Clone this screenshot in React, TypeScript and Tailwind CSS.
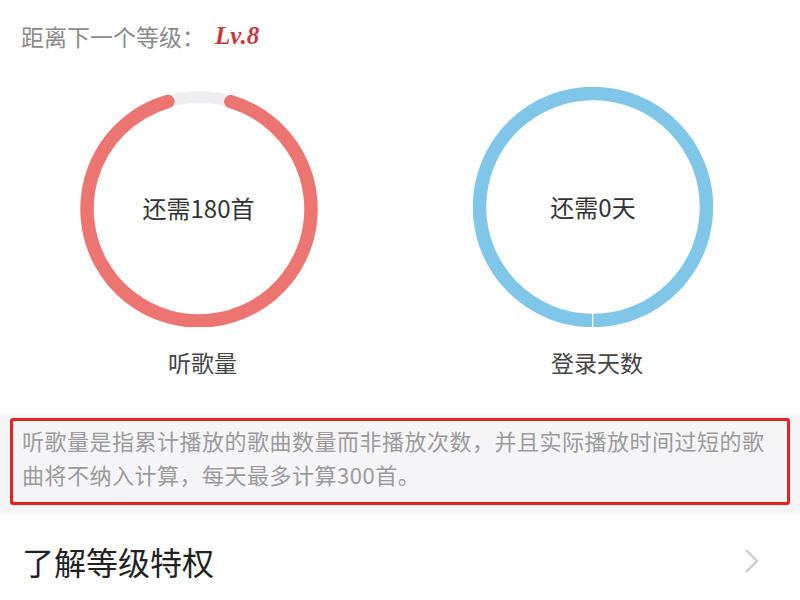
import React from "react";

const font = { fontFamily: '"Noto Sans CJK SC", "Noto Sans", sans-serif' };

function RedRing() {
  const r = 112;
  const c = 2 * Math.PI * r;
  const gapDeg = 33;
  const len = c * (1 - gapDeg / 360);
  return (
    <svg width="240" height="240" viewBox="0 0 240 240">
      <circle cx="120" cy="122" r={r} fill="none" stroke="#eeeef0" strokeWidth="12" />
      <circle
        cx="120"
        cy="122"
        r={r}
        fill="none"
        stroke="#ec7571"
        strokeWidth="13.5"
        strokeLinecap="round"
        strokeDasharray={`${len} ${c}`}
        transform={`rotate(${-90 + gapDeg / 2} 120 122)`}
      />
    </svg>
  );
}

function BlueRing() {
  const r = 113.5;
  const c = 2 * Math.PI * r;
  return (
    <svg width="240" height="240" viewBox="0 0 240 240">
      <circle
        cx="120"
        cy="120"
        r={r}
        fill="none"
        stroke="#7fc6e8"
        strokeWidth="13.5"
        strokeDasharray={`${c - 2} ${c}`}
        transform="rotate(90.5 120 120)"
      />
    </svg>
  );
}

export default function App() {
  return (
    <div className="w-[800px] h-[600px] bg-white overflow-hidden" style={font}>
      <div className="h-[72px] flex items-center pl-[21px]">
        <span className="text-[23px] text-[#8a8a8a]">距离下一个等级：</span>
        <span
          className="text-[25px] font-bold italic text-[#c8383b] ml-[10px]"
          style={{ fontFamily: '"Liberation Serif", serif' }}
        >
          Lv.8
        </span>
      </div>
      <div className="grid grid-cols-2 pt-[15px]">
        <div className="flex flex-col items-center pr-[3px]">
          <div className="relative w-[240px] h-[240px]">
            <RedRing />
            <div className="absolute inset-0 flex items-center justify-center pt-[2px] text-[24px] text-[#333]">
              还需180首
            </div>
          </div>
          <div className="mt-[18px] leading-[34px] text-[23px] text-[#444] pl-[8px]">听歌量</div>
        </div>
        <div className="flex flex-col items-center pr-[14px]">
          <div className="relative w-[240px] h-[240px]">
            <BlueRing />
            <div className="absolute inset-0 flex items-center justify-center text-[24px] text-[#333]">
              还需0天
            </div>
          </div>
          <div className="mt-[18px] leading-[34px] text-[23px] text-[#444] pl-[8px]">登录天数</div>
        </div>
      </div>
      <div className="mt-[35px] h-[100px] bg-[#f5f5f7] pt-[4px] px-[10px]">
        <div className="border-[3px] border-[#e8211c] rounded-[3px] pt-[2px] pb-[11px] pl-[9px] pr-[8px] text-[22px] leading-[34px] tracking-[0.5px] text-[#9a9a9a]">
          听歌量是指累计播放的歌曲数量而非播放次数，并且实际播放时间过短的歌曲将不纳入计算，每天最多计算300首。
        </div>
      </div>
      <div className="h-[94px] flex items-center justify-between pl-[22px] pr-[40px]">
        <span className="text-[32px] text-[#222]">了解等级特权</span>
        <svg width="16" height="26" viewBox="0 0 16 26">
          <path d="M2 2 L13 13 L2 24" fill="none" stroke="#c8c8c8" strokeWidth="2" />
        </svg>
      </div>
    </div>
  );
}
